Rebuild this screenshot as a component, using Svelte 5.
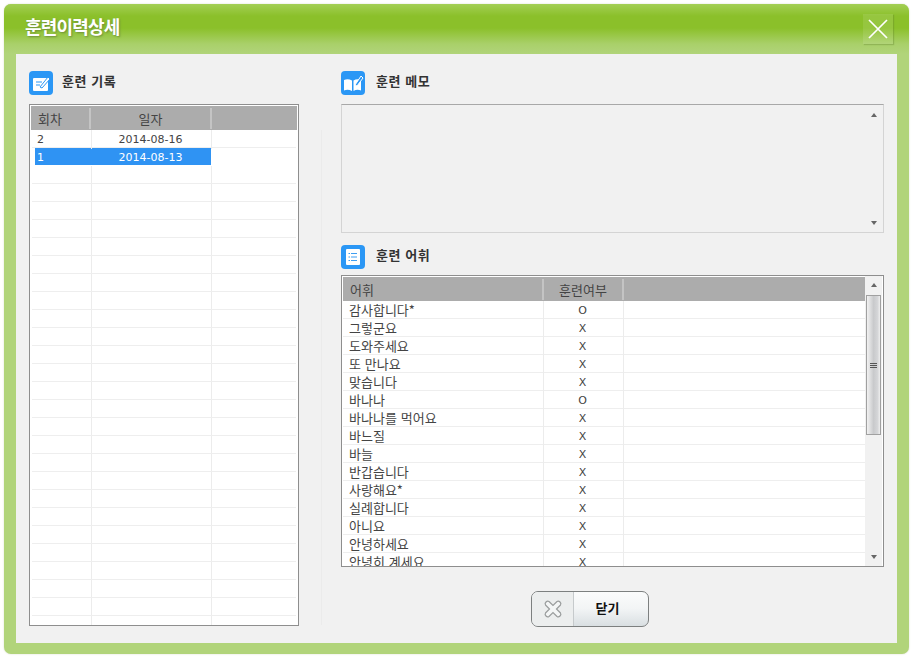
<script>
  const records = [
    { no: '2', date: '2014-08-16' },
    { no: '1', date: '2014-08-13', selected: true }
  ];
  const emptyRows = Array.from({ length: 26 });
  const words = [
    ['감사합니다*', 'O'], ['그렇군요', 'X'], ['도와주세요', 'X'], ['또 만나요', 'X'], ['맞습니다', 'X'],
    ['바나나', 'O'], ['바나나를 먹어요', 'X'], ['바느질', 'X'], ['바늘', 'X'], ['반갑습니다', 'X'],
    ['사랑해요*', 'X'], ['실례합니다', 'X'], ['아니요', 'X'], ['안녕하세요', 'X'], ['안녕히 계세요', 'X']
  ];
</script>

<div class="page">
  <div class="window">
    <header class="titlebar">
      <h1>훈련이력상세</h1>
      <button class="close" aria-label="닫기">
        <svg width="22" height="22" viewBox="0 0 22 22"><path d="M2 2 L20 20 M20 2 L2 20" stroke="#fff" stroke-width="1.700" fill="none"/></svg>
      </button>
    </header>
    <main class="content">
      <section class="left">
        <div class="heading">
          <span class="icon">
            <svg width="24" height="24" viewBox="0 0 24 24">
              <rect x="4" y="7" width="15" height="13" rx="1" fill="#fff"/>
              <path d="M7 11h6M7 14h4" stroke="#2b97f5" stroke-width="1.200"/>
              <path d="M11 16 L19 6 L21 8 L13 17 Z" fill="#fff" stroke="#2b97f5" stroke-width="1"/>
            </svg>
          </span>
          <h2>훈련 기록</h2>
        </div>
        <div class="table records">
          <div class="rec-row head"><span class="c1">회차</span><span class="c2">일자</span><span class="c3"></span></div>
          {#each records as r}
            <div class="rec-row" class:selected={r.selected}>
              <span class="c1 num">{r.no}</span><span class="c2 num">{r.date}</span><span class="c3"></span>
            </div>
          {/each}
          {#each emptyRows as _}
            <div class="rec-row"><span class="c1"></span><span class="c2"></span><span class="c3"></span></div>
          {/each}
        </div>
      </section>
      <div class="divider"></div>
      <section class="right">
        <div class="heading">
          <span class="icon">
            <svg width="24" height="24" viewBox="0 0 24 24">
              <path d="M3 9 Q7 7.500 11 9.500 V20 Q7 18 3 19.500 Z" fill="#fff"/>
              <path d="M12.500 9.500 Q16 7.500 20 9 V19.500 Q16 18 12.500 20 Z" fill="#fff"/>
              <path d="M14 14 L20 5 L22 7 L16 15 Z" fill="#2b97f5" stroke="#fff" stroke-width="1"/>
            </svg>
          </span>
          <h2>훈련 메모</h2>
        </div>
        <div class="memo">
          <div class="memo-text"></div>
          <div class="memo-scroll"><i class="up"></i><i class="down"></i></div>
        </div>
        <div class="heading second">
          <span class="icon">
            <svg width="24" height="24" viewBox="0 0 24 24">
              <rect x="5" y="4" width="14" height="16" rx="1" fill="#fff"/>
              <path d="M10 8.500h6M10 12h6M10 15.500h6M7.500 8.500h1.500M7.500 12h1.500M7.500 15.500h1.500" stroke="#3f9ef0" stroke-width="1"/>
            </svg>
          </span>
          <h2>훈련 어휘</h2>
        </div>
        <div class="table vocab">
          <div class="vocab-list">
            <div class="voc-row head"><span class="v1">어휘</span><span class="v2">훈련여부</span><span class="v3"></span></div>
            {#each words as w}
              <div class="voc-row"><span class="v1">{w[0]}</span><span class="v2 num">{w[1]}</span><span class="v3"></span></div>
            {/each}
          </div>
          <div class="scrollbar">
            <i class="up"></i>
            <div class="thumb"><b></b><b></b><b></b></div>
            <i class="down"></i>
          </div>
        </div>
        <button class="close-btn">
          <span class="btn-icon">
            <svg width="20" height="20" viewBox="0 0 20 20">
              <path d="M6 2.500 L10 6.500 L14 2.500 Q15.500 1.500 17 3 Q18.500 4.500 17.500 6 L13.500 10 L17.500 14 Q18.500 15.500 17 17 Q15.500 18.500 14 17.500 L10 13.500 L6 17.500 Q4.500 18.500 3 17 Q1.500 15.500 2.500 14 L6.500 10 L2.500 6 Q1.500 4.500 3 3 Q4.500 1.500 6 2.500 Z" fill="#f4f6f6" stroke="#9a9d9d" stroke-width="1.200"/>
            </svg>
          </span>
          <span class="btn-label">닫기</span>
        </button>
      </section>
    </main>
  </div>
</div>

<style>
  :global(body) { margin: 0; background: #fff; }
  .page {
    width: 913px;
    height: 659px;
    box-sizing: border-box;
    padding: 4px 4px 5px 4px;
    font-family: "Noto Sans CJK KR", sans-serif;
    font-size: 13px;
    word-spacing: 1px;
    color: #444;
    overflow: hidden;
  }
  .window {
    height: 100%;
    display: flex;
    flex-direction: column;
    border-radius: 7px;
    background: #b1d47a;
    box-shadow: 0 0 2px #d8dcc8;
  }
  .titlebar {
    height: 50px;
    flex: none;
    display: flex;
    align-items: center;
    justify-content: space-between;
    padding: 0 16px 4px 21px;
    box-sizing: border-box;
    border-radius: 7px 7px 0 0;
    background: linear-gradient(#a3cf55 0, #8bc02a 12px, #8bc02a 24px, #a9d06a 40px, #b1d47a 50px);
  }
  h1 {
    margin: 0 0 2px;
    font-size: 18px;
    font-weight: 700;
    letter-spacing: -0.800px;
    color: #fff;
    text-shadow: 1px 1px 2px #6f8f3a;
  }
  .close {
    width: 30px;
    height: 30px;
    padding: 0;
    border: 0;
    display: flex;
    align-items: center;
    justify-content: center;
    background: rgba(255, 255, 255, 0.1);
    box-shadow: 1px 1px 1px rgba(90, 120, 40, 0.3);
    margin-top: 3px;
  }
  .content {
    flex: 1;
    margin: 0 12px 11px;
    background: #f1f1f1;
    padding: 17px 13px 0;
    display: flex;
    align-items: flex-start;
  }
  .left { width: 270px; flex: none; }
  .divider {
    width: 1px;
    height: 495px;
    margin: 59px 19px 0 22px;
    background: #ebebeb;
    flex: none;
  }
  .right { width: 543px; flex: none; }
  .heading {
    height: 24px;
    display: flex;
    align-items: center;
    margin-bottom: 9px;
  }
  .heading.second { margin-top: 12px; margin-bottom: 6px; }
  .icon {
    width: 24px;
    height: 24px;
    border-radius: 4px;
    background: #2b97f5;
    display: block;
    flex: none;
  }
  .icon svg { display: block; }
  .heading h2 {
    margin: 0 0 5px 11px;
    font-size: 13px;
    font-weight: 700;
    color: #333;
    letter-spacing: 0.500px;
  }
  .left .heading h2 { margin-left: 9px; }
  .table {
    box-sizing: border-box;
    background: #fff;
    border: 1px solid #8e8e8e;
    overflow: hidden;
  }
  .records { height: 522px; padding: 1px 1px 0; }
  .rec-row {
    display: grid;
    grid-template-columns: 60px 120px 1fr;
    height: 18px;
    line-height: 17px;
    box-sizing: border-box;
    border-bottom: 1px solid #eeeeee;
    margin: 0 1px;
  }
  .rec-row span { border-right: 1px solid #ececec; white-space: nowrap; }
  .rec-row .c3 { border-right: 0; }
  .rec-row .c1 { padding-left: 5px; }
  .rec-row .c2 { text-align: center; }
  .rec-row.head {
    height: 24px;
    margin: 0;
    line-height: 23px;
    background: #acacac;
    border: 0;
    color: #444;
    grid-template-columns: 60px 121px 1fr;
  }
  .rec-row.head span { border-right: 2px solid #c4c4c4; margin: 2px 0; line-height: 21px; }
  .rec-row.head .c1 { padding-left: 7px; }
  .rec-row.head .c3 { border-right: 0; }
  .rec-row.selected { background: linear-gradient(90deg, #fff 3px, #2f93f3 3px, #2f93f3 179px, #fff 179px); color: #fff; border-bottom-color: #fff; }
  .rec-row.selected span { border-right-color: transparent; }
  .rec-row span.num, .voc-row span.num {
    font-family: "DejaVu Sans", sans-serif;
    font-size: 11px;
    line-height: 19px;
  }
  .rec-row span.c2.num, .voc-row span.v2.num { padding-right: 2px; }
  .memo {
    height: 129px;
    box-sizing: border-box;
    border: 1px solid #d4d4d4;
    border-top-color: #a8a8a8;
    display: flex;
  }
  .memo-text { flex: 1; }
  .memo-scroll {
    width: 19px;
    display: flex;
    flex-direction: column;
    justify-content: space-between;
    align-items: center;
    padding: 8px 0 7px;
  }
  i.up, i.down { display: block; width: 0; height: 0; border-left: 3.500px solid transparent; border-right: 3.500px solid transparent; }
  i.up { border-bottom: 4px solid #666; }
  i.down { border-top: 4px solid #666; }
  .vocab {
    height: 292px;
    padding: 1px 1px 0;
    display: flex;
  }
  .vocab-list { width: 522px; overflow: hidden; height: 289px; }
  .voc-row {
    display: grid;
    grid-template-columns: 201px 80px 1fr;
    height: 18px;
    line-height: 17px;
    box-sizing: border-box;
    border-bottom: 1px solid #eeeeee;
  }
  .voc-row span { border-right: 1px solid #ececec; white-space: nowrap; }
  .voc-row .v3 { border-right: 0; }
  .voc-row .v1 { padding-left: 6px; }
  .voc-row .v2 { text-align: center; }
  .voc-row.head { height: 24px; background: #acacac; border: 0; }
  .voc-row.head span { border-right: 2px solid #c4c4c4; margin: 2px 0; line-height: 21px; }
  .voc-row.head .v1 { padding-left: 7px; }
  .voc-row.head .v3 { border-right: 0; }
  .scrollbar {
    flex: 1;
    background: #f1f1f1;
    display: flex;
    flex-direction: column;
    align-items: center;
    padding-top: 7px;
    box-sizing: border-box;
    margin-top: -1px;
    height: 291px;
  }
  .thumb {
    width: 15px;
    height: 140px;
    box-sizing: border-box;
    margin: 8px 0 120px;
    border: 1px solid #a0a0a0;
    background: linear-gradient(90deg, #f2f2f2, #c9cacc 50%, #d4d5d7 80%, #eeeeee);
    display: flex;
    flex-direction: column;
    justify-content: center;
    align-items: center;
    gap: 1px;
  }
  .thumb b { display: block; width: 7px; height: 1px; background: #555; }
  .close-btn {
    display: flex;
    width: 118px;
    height: 36px;
    margin: 24px 0 0 190px;
    padding: 0;
    border: 1px solid #7d8080;
    border-radius: 7px;
    background: linear-gradient(#fbfcfc, #f2f4f5 50%, #d9dfe2);
    font: inherit;
    overflow: hidden;
  }
  .btn-icon {
    width: 41px;
    height: 100%;
    flex: none;
    display: flex;
    align-items: center;
    justify-content: center;
    border-right: 1px solid #c6cacc;
    background: #eceeee;
    box-sizing: content-box;
  }
  .btn-label {
    flex: 1;
    font-size: 13px;
    font-weight: 700;
    color: #111;
    line-height: 31px;
    text-align: center;
    padding-right: 7px;
  }
</style>
